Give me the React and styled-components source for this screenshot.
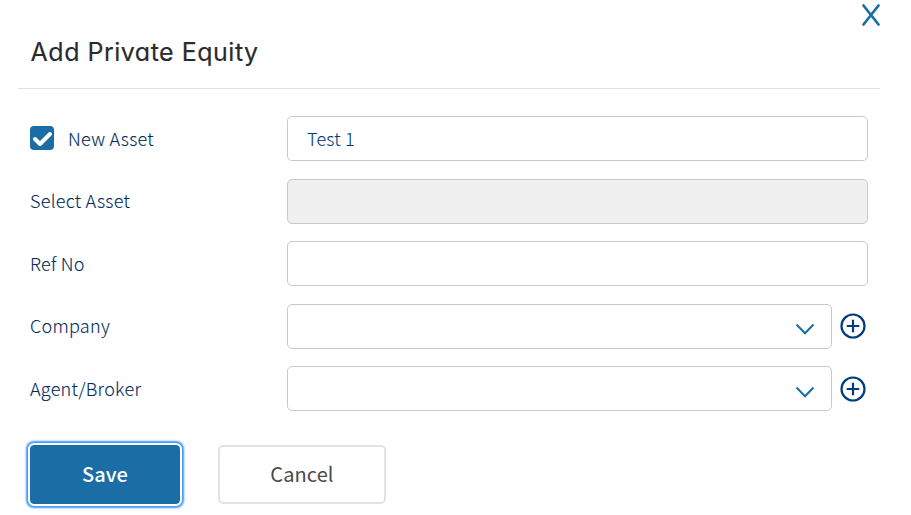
import { useState } from "react";
import styled, { createGlobalStyle } from "styled-components";

const GlobalStyle = createGlobalStyle`
  * {
    box-sizing: border-box;
  }

  body {
    margin: 0;
    background-color: #fff;
    font-family: "Noto Sans CJK SC", "Noto Sans", sans-serif;
    overflow: hidden;
  }
`;

const Modal = styled.div`
  position: relative;
  width: 911px;
  height: 515px;
  padding: 0 31px 0 18px;
`;

const Header = styled.header`
  height: 89px;
  padding: 34px 12.6px 0;
  border-bottom: 1px solid #e1e1e1;
`;

const Title = styled.h2`
  margin: 0;
  font-family: Inter, sans-serif;
  font-feature-settings: "cv11";
  font-size: 25px;
  font-weight: 400;
  line-height: 37px;
  letter-spacing: 0.5px;
  color: #2b2b2b;
  -webkit-text-stroke: 0.15px;
`;

const CloseButton = styled.button`
  position: absolute;
  top: 4px;
  right: 31px;
  width: 18px;
  height: 22px;
  padding: 0;
  border: none;
  background: none;
  cursor: pointer;
  color: #1a6ea5;

  svg {
    display: block;
  }
`;

const Fields = styled.div`
  display: grid;
  grid-auto-rows: 45px;
  row-gap: 17.5px;
  padding: 27px 12px 0;
`;

const Row = styled.div`
  display: grid;
  grid-template-columns: 257px 1fr;
  align-items: center;
`;

const Label = styled.label`
  display: flex;
  align-items: center;
  gap: 14px;
  height: 45px;
  padding-bottom: 1px;
  font-size: 18px;
  font-weight: 300;
  line-height: 43px;
  letter-spacing: 0.26px;
  color: #002b5c;
  -webkit-text-stroke: 0.1px;
`;

const LabelText = styled.span`
  height: 44px;
  padding-top: 0.7px;
`;

const Checkbox = styled.span`
  display: flex;
  width: 24px;
  height: 24px;
  border-radius: 4px;
  background-color: #1a6ea5;
`;

const HiddenInput = styled.input`
  position: absolute;
  opacity: 0;
  pointer-events: none;
`;

const Input = styled.input`
  width: 581px;
  height: 45px;
  padding: 0 19px 1px;
  border: 1px solid #c9c9c9;
  border-radius: 5px;
  outline: none;
  background-color: #fff;
  font-family: inherit;
  font-size: 18px;
  font-weight: 300;
  letter-spacing: 0.2px;
  color: #003d7d;
  -webkit-text-stroke: 0.1px;

  &:disabled {
    background-color: #f0f0f0;
  }
`;

const SelectGroup = styled.div`
  display: flex;
  align-items: center;
  gap: 8px;
`;

const Select = styled.button`
  display: flex;
  align-items: center;
  justify-content: flex-end;
  width: 545px;
  height: 45px;
  padding: 6px 16px 0;
  border: 1px solid #c9c9c9;
  border-radius: 5px;
  background-color: #fff;
  cursor: pointer;
`;

const AddButton = styled.button`
  display: flex;
  padding: 0;
  border: none;
  background: none;
  cursor: pointer;
`;

const Actions = styled.div`
  display: flex;
  align-items: center;
  gap: 36px;
  padding: 32px 10px 0;
`;

const Button = styled.button`
  width: 168px;
  height: 59px;
  padding: 0 0 2px;
  border: 2px solid #e3e3e3;
  border-radius: 5px;
  outline: none;
  background-color: #fff;
  font-family: inherit;
  font-size: 20px;
  font-weight: 400;
  line-height: 53px;
  letter-spacing: 0.1px;
  color: #4a4a4a;
  cursor: pointer;
`;

const SaveButton = styled(Button)`
  width: 154px;
  height: 63px;
  border-color: #fff;
  border-radius: 6px;
  background-color: #1a6ea5;
  background-clip: padding-box;
  box-shadow: 0 0 2px 2px #3f98fa;
  font-weight: 500;
  letter-spacing: 0;
  color: #fff;
`;

const SelectField = ({ label }) => (
  <SelectGroup>
    <Select type="button" aria-label={label}>
      <svg width="20" height="12" viewBox="0 0 20 12" fill="none">
        <path d="M1.5 1.5 10 10.3l8.5-8.8" stroke="#1a6ea5" strokeWidth="2" />
      </svg>
    </Select>
    <AddButton type="button" aria-label={`Add ${label}`}>
      <svg width="26" height="26" viewBox="0 0 26 26" fill="none">
        <circle cx="13" cy="13" r="11.5" stroke="#003d7d" strokeWidth="2.2" />
        <path d="M6.7 13h12.6M13 6.7v12.6" stroke="#003d7d" strokeWidth="2.2" />
      </svg>
    </AddButton>
  </SelectGroup>
);

const App = () => {
  const [isNew, setIsNew] = useState(true);
  const [asset, setAsset] = useState("Test 1");
  const [refNo, setRefNo] = useState("");

  return (
    <>
      <GlobalStyle />
      <Modal>
        <CloseButton type="button" aria-label="Close">
          <svg width="18" height="22" viewBox="0 0 18 22" fill="none">
            <path
              d="m1.5 1.5 15 19M16.5 1.5l-15 19"
              stroke="currentColor"
              strokeWidth="2.7"
              strokeLinecap="round"
            />
          </svg>
        </CloseButton>
        <Header>
          <Title>Add Private Equity</Title>
        </Header>
        <Fields>
          <Row>
            <Label>
              <HiddenInput
                type="checkbox"
                checked={isNew}
                onChange={(e) => setIsNew(e.target.checked)}
              />
              <Checkbox>
                {isNew && (
                  <svg width="24" height="24" viewBox="0 0 24 24" fill="none">
                    <path
                      d="m5 13 5 5L20 8"
                      stroke="#fff"
                      strokeWidth="4"
                      strokeLinejoin="round"
                      strokeLinecap="round"
                    />
                  </svg>
                )}
              </Checkbox>
              <LabelText>New Asset</LabelText>
            </Label>
            <Input value={asset} onChange={(e) => setAsset(e.target.value)} />
          </Row>
          <Row>
            <Label>
              <LabelText>Select Asset</LabelText>
            </Label>
            <Input disabled />
          </Row>
          <Row>
            <Label>
              <LabelText>Ref No</LabelText>
            </Label>
            <Input value={refNo} onChange={(e) => setRefNo(e.target.value)} />
          </Row>
          <Row>
            <Label>
              <LabelText>Company</LabelText>
            </Label>
            <SelectField label="Company" />
          </Row>
          <Row>
            <Label>
              <LabelText>Agent/Broker</LabelText>
            </Label>
            <SelectField label="Agent/Broker" />
          </Row>
        </Fields>
        <Actions>
          <SaveButton type="button">Save</SaveButton>
          <Button type="button">Cancel</Button>
        </Actions>
      </Modal>
    </>
  );
};

export default App;
